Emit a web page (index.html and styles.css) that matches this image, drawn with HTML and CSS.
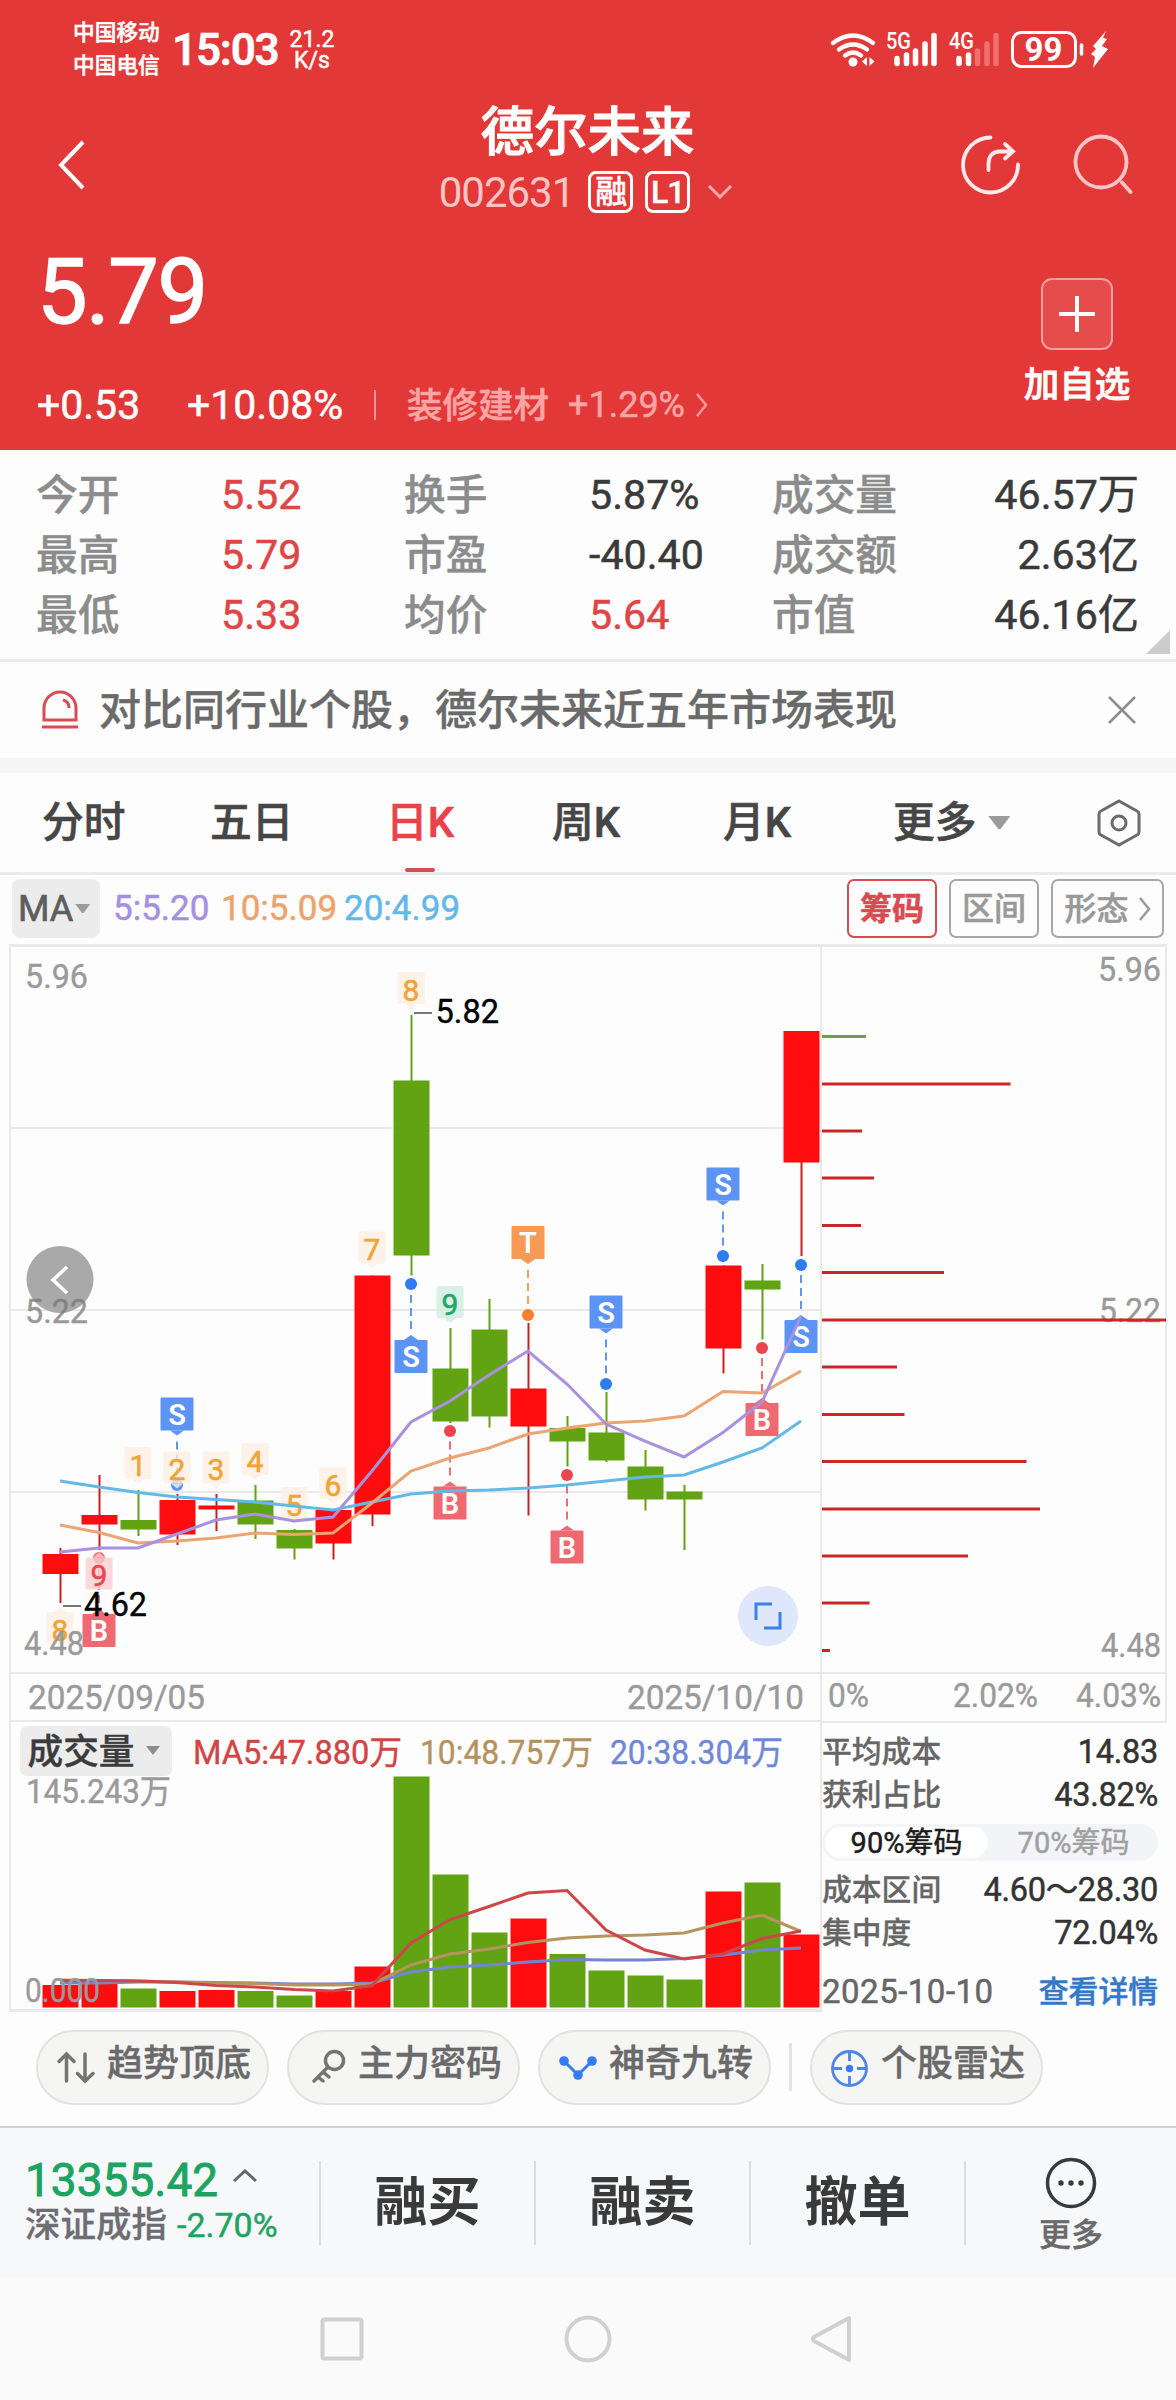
FILE: index.html
```html
<!DOCTYPE html>
<html lang="zh-CN">
<head>
<meta charset="utf-8">
<title>德尔未来 002631</title>
<link rel="stylesheet" href="styles.css">
</head>
<body>
<header class="hero">
  <div class="status">
    <div class="carriers"><span>中国移动</span><span>中国电信</span></div>
    <div class="clock">15:03</div>
    <div class="speed"><span>21.2</span><span>K/s</span></div>
    <svg class="status-icons" width="280" height="42" viewBox="830 28 280 42" fill="none" stroke="#fff" stroke-linecap="round">
      <path d="M833 43q20-15 40 0M839 49.500q14-10 28 0M845 55.500q8-6 16 0" stroke-width="4.200"/>
      <circle cx="853" cy="62" r="4.5" fill="#fff" stroke="none"/>
      <path d="M867 57v9l-5-4.500zM869.500 57v9l5-4.500z" fill="#fff" stroke="none"/>
      <path d="M897 58.500v5M906.500 55v8.500M915.500 51v12.500M925 44v19.500M934 35.500v28" stroke-width="5.5"/>
      <path d="M959 58.500v5M968.500 55v8.500" stroke-width="5.5"/>
      <path d="M977.500 51v12.500M987 44v19.500M996 35.500v28" stroke-width="5.5" stroke="#f07070"/>
      <rect x="1012.500" y="32.500" width="63" height="34" rx="9" stroke-width="3"/>
      <path d="M1081.500 45v9" stroke-width="3.500"/>
      <path d="M1106 31l-13 15 3 3-5 5 4 3-2 11 15-19-6-3 5-7-4-1z" fill="#fff" stroke="none"/>
      <g class="status-text" fill="#fff" stroke="none">
        <text x="886" y="49" font-size="23" font-weight="500" textLength="25" lengthAdjust="spacingAndGlyphs">5G</text>
        <text x="949" y="49" font-size="23" font-weight="500" textLength="25" lengthAdjust="spacingAndGlyphs">4G</text>
        <text x="1043.500" y="61" font-size="33" font-weight="700" text-anchor="middle">99</text>
      </g>
    </svg>
  </div>
  <div class="titlebar">
    <svg class="back" width="30" height="52" viewBox="0 0 30 52" fill="none" stroke="#fff" stroke-width="4"><path d="M26 3L4 26l22 23"/></svg>
    <div class="title">
      <h1>德尔未来</h1>
      <div class="code"><span>002631</span><b>融</b><b>L1</b>
        <svg width="26" height="14" viewBox="0 0 26 14" fill="none" stroke="#f5a9a9" stroke-width="3"><path d="M2 1l11 11L24 1"/></svg></div>
    </div>
    <svg class="tools" width="174" height="62" viewBox="959 133 174 62" fill="none" stroke="#ffe9e9" stroke-width="3.800" stroke-linecap="round">
      <path d="M990.500 137.500a27.500 27.500 0 1 0 27.500 27"/>
      <path d="M988.500 170v-6c0-8 4-12.500 11-12.500h12M1005 144l8 7.500-8 7"/>
      <circle cx="1101" cy="162" r="25.500" stroke="#ffc5c5"/><path d="M1122 182.500l8.500 9.500" stroke="#ffc5c5"/>
    </svg>
  </div>
  <div class="quote">
    <div class="price">5.79</div>
    <div class="change"><span class="diff">+0.53</span><span class="pct">+10.08%</span><i></i><span class="sector">装修建材</span><span class="sector-pct">+1.29%</span>
      <svg width="14" height="26" viewBox="0 0 14 26" fill="none" stroke="#f79b9b" stroke-width="2.500"><path d="M2 2l9 11-9 11"/></svg></div>
    <div class="fav"><div class="plus"><svg width="36" height="36" viewBox="0 0 36 36" stroke="#fff" stroke-width="4"><path d="M18 0v36M0 18h36"/></svg></div><span>加自选</span></div>
  </div>
</header>

<section class="stats">
  <label>今开</label><span class="up">5.52</span><label>换手</label><span>5.87%</span><label>成交量</label><span class="end">46.57万</span>
  <label>最高</label><span class="up">5.79</span><label>市盈</label><span>-40.40</span><label>成交额</label><span class="end">2.63亿</span>
  <label>最低</label><span class="up">5.33</span><label>均价</label><span class="up">5.64</span><label>市值</label><span class="end">46.16亿</span>
</section>

<section class="notice">
  <svg width="38" height="40" viewBox="0 0 38 40" fill="none" stroke="#d94b52" stroke-width="3"><path d="M3 30V18a16 16 0 0 1 32 0v12zM1 37h36M22 10c4 1 6 4 6 8"/></svg>
  <p>对比同行业个股，德尔未来近五年市场表现</p>
  <svg width="28" height="28" viewBox="0 0 28 28" stroke="#8d8d8d" stroke-width="2.500"><path d="M1 1l26 26M27 1L1 27"/></svg>
</section>

<nav class="tabs">
  <span>分时</span><span>五日</span><span class="on">日K</span><span>周K</span><span>月K</span>
  <span class="more">更多<i class="tri"></i></span>
  <svg width="44" height="48" viewBox="0 0 44 48" fill="none" stroke="#6b6b6b" stroke-width="3"><path d="M22 2l18 10q2 1 2 3v18q0 2-2 3L22 46 4 36q-2-1-2-3V15q0-2 2-3z"/><circle cx="22" cy="24" r="7"/></svg>
</nav>

<section class="indicators">
  <button class="select">MA<i class="tri"></i></button>
  <span class="m5">5:5.20</span><span class="m10">10:5.09</span><span class="m20">20:4.99</span>
  <div class="modes"><button class="on">筹码</button><button>区间</button><button class="wide">形态<svg width="13" height="26" viewBox="0 0 13 26" fill="none" stroke="#999" stroke-width="2.500"><path d="M2 2l9 11-9 11"/></svg></button></div>
</section>

<section class="chart">
  <svg id="kline" width="813" height="1068" viewBox="9 944 813 1068"></svg>
  <aside>
    <svg id="chips" width="345" height="780" viewBox="822 944 345 780"></svg>
    <div class="panel">
      <div class="line"><span>平均成本</span><b>14.83</b></div>
      <div class="line"><span>获利占比</span><b>43.82%</b></div>
      <div class="toggle"><span class="on">90%筹码</span><span>70%筹码</span></div>
      <div class="line"><span>成本区间</span><b>4.60～28.30</b></div>
      <div class="line"><span>集中度</span><b>72.04%</b></div>
      <div class="line last"><em>2025-10-10</em><a>查看详情</a></div>
    </div>
  </aside>
</section>

<section class="pills">
  <div class="pill"><svg width="40" height="40" viewBox="0 0 40 40" fill="none" stroke="#747474" stroke-width="3.500" stroke-linecap="round"><path d="M10.500 33V6M3 13.500L10.500 6l7.500 7.500M29 6v27M21.500 25.500L29 33l8-7.500"/></svg><span>趋势顶底</span></div>
  <div class="pill"><svg width="40" height="40" viewBox="0 0 40 40" fill="none" stroke="#747474" stroke-width="3.500" stroke-linecap="round"><circle cx="27.500" cy="12.500" r="9"/><path d="M20.500 19.500L7 33M16 24l6 5M11 29l5 4"/></svg><span>主力密码</span></div>
  <div class="pill"><svg width="40" height="40" viewBox="0 0 40 40" fill="#357bf2" stroke="#357bf2" stroke-width="3"><path d="M6 13l14 14 14-14" fill="none"/><g stroke="none"><circle cx="6" cy="13" r="4.800"/><circle cx="34" cy="13" r="4.800"/><circle cx="20" cy="27" r="4.800"/></g></svg><span>神奇九转</span></div>
  <i></i>
  <div class="pill"><svg width="40" height="40" viewBox="0 0 40 40" fill="none" stroke="#4d85ea" stroke-width="2.800"><circle cx="19.500" cy="20.500" r="17"/><path d="M19.500 4v9M19.500 28v9M3 20.500h9M27 20.500h9"/><circle cx="19.500" cy="20.500" r="3.700" fill="#357bf2" stroke="none"/></svg><span>个股雷达</span></div>
</section>

<footer class="actions">
  <div class="index">
    <div class="top">13355.42<svg width="26" height="14" viewBox="0 0 26 14" fill="none" stroke="#666" stroke-width="3"><path d="M2 12L13 2l11 10"/></svg></div>
    <div class="bottom"><span>深证成指</span><em>-2.70%</em></div>
  </div>
  <div class="act">融买</div><div class="act">融卖</div><div class="act">撤单</div>
  <div class="act more"><svg width="52" height="52" viewBox="0 0 52 52" fill="none" stroke="#3a3a3a" stroke-width="3.500"><circle cx="26" cy="26" r="23.500"/><g fill="#3a3a3a" stroke="none"><circle cx="16" cy="26" r="2.700"/><circle cx="26" cy="26" r="2.700"/><circle cx="36" cy="26" r="2.700"/></g></svg><span>更多</span></div>
</footer>
<div class="sysnav">
  <svg width="534" height="50" viewBox="320 2314 534 50" fill="none" stroke="#d0d0d0" stroke-width="4"><rect x="322.500" y="2319.500" width="39" height="39" rx="2"/><circle cx="588" cy="2339" r="21.500"/><path d="M849 2318v42l-35-19q-2-2 0-4z" stroke-linejoin="round"/></svg>
</div>
<script src="chart.js"></script>
</body>
</html>
```
FILE: styles.css
```css
* { box-sizing: border-box; }
body { margin: 0; width: 1176px; height: 2400px; background: #fdfdfd; color: #3a3a3a; font-family: Roboto, "Noto Sans CJK SC", sans-serif; overflow: hidden; -webkit-text-stroke: .5px; }
svg { display: block; flex: none; -webkit-text-stroke: 0; }
svg text { font-family: Roboto, "Noto Sans CJK SC", sans-serif; }
i, em { font-style: normal; }
button { font: inherit; background: none; border: 0; padding: 0; }

.hero { height: 450px; background: #e33838; color: #fff; }
.status { height: 100px; display: flex; padding: 0 66px 0 73px; }
.carriers { display: flex; flex-direction: column; padding-top: 16px; width: 99px; font-size: 21.7px; line-height: 33px; font-weight: 500; }
.clock { font-size: 44px; line-height: 101px; font-weight: 600; letter-spacing: -1.2px; width: 117px; }
.speed { display: flex; flex-direction: column; padding-top: 29px; width: 46px; align-items: center; font-size: 23px; line-height: 21px; }
.status-icons { margin: 28px 0 0 auto; }
.titlebar { height: 125px; display: flex; justify-content: space-between; padding: 0 43px 0 57px; }
.back { margin-top: 39px; }
.title { width: 320px; margin-left: 129px; display: flex; flex-direction: column; align-items: center; -webkit-text-stroke: .4px; }
.title h1 { margin: 0; font-size: 53.500px; line-height: 60px; padding-top: 3px; font-weight: 500; white-space: nowrap; -webkit-text-stroke: 1px; }
.code { display: flex; align-items: center; height: 58px; font-size: 42px; color: #fbc4c4; letter-spacing: -1px; margin-left: -3px; }
.code span { margin-right: 14px; -webkit-text-stroke: 0; }
.code b { width: 45px; height: 42px; border: 3px solid #fff; border-radius: 8px; margin-right: 12px; font-size: 32px; line-height: 36px; color: #fff; text-align: center; font-weight: 500; }
.code svg { margin-left: 5px; }
.tools { margin-top: 33px; }
.quote { height: 225px; display: grid; grid-template: 125px 100px / 1fr 106px; padding: 0 46px 0 37px; }
.price { font-size: 90px; line-height: 136px; font-weight: 400; letter-spacing: -1.5px; -webkit-text-stroke: 1.5px; }
.change { display: flex; align-items: center; height: 110px; font-size: 41px; }
.diff { width: 150px; } .pct { width: 187px; }
.change i { width: 2px; height: 30px; background: #f09494; margin-right: 31px; }
.sector { font-size: 35.500px; width: 161px; color: #f9a5a5; font-weight: 500; margin-top: -5px; }
.sector-pct { font-size: 36px; width: 127px; color: #f9a5a5; }
.fav { grid-column: 2; grid-row: 1 / 3; display: flex; flex-direction: column; align-items: center; padding-top: 53px; font-size: 35.500px; line-height: 71px; font-weight: 500; white-space: nowrap; -webkit-text-stroke: .8px; }
.plus { flex: none; width: 72px; height: 72px; border: 2px solid #f2a0a0; border-radius: 11px; background: #e64c4c; display: flex; align-items: center; justify-content: center; }

.stats { height: 212px; display: grid; grid-template: repeat(3, 60px) / 185px 183px 185px 183px 180px 1fr; padding: 15px 37px 0 36px; font-size: 41.200px; line-height: 61px; border-bottom: 3px solid #ebebeb; position: relative; }
.stats::after { content: ""; position: absolute; right: 6px; bottom: 5px; border: 12px solid; border-color: transparent #ccc #ccc transparent; }
.stats label { color: #8c8c8c; font-size: 41.700px; font-weight: 500; line-height: 62px; -webkit-text-stroke: .4px; }
.stats .up { color: #df4545; }
.stats .end { text-align: right; white-space: nowrap; }

.notice { height: 111px; display: flex; align-items: center; padding: 0 40px 0 41px; border-bottom: 15px solid #f5f5f5; }
.notice p { flex: 1; margin: 2px 0 0 20px; font-size: 42px; color: #6a6a6a; font-weight: 500; line-height: 60px; -webkit-text-stroke: .4px; }

.tabs { height: 102px; display: grid; grid-template-columns: 168px 173px 169px 171px 170px 204px 44px; padding: 0 0 0 42px; align-items: center; font-size: 41.700px; line-height: 99px; font-weight: 500; color: #464646; border-bottom: 3px solid #ebebeb; -webkit-text-stroke: .6px; }
.tabs span { height: 99px; }
.tabs .on { color: #e8434a; display: flex; flex-direction: column; padding-left: 3px; }
.tabs .on::after { content: ""; width: 30px; height: 4px; background: #d94b52; margin: -4px 0 0 19px; border-radius: 2px; }
.more { display: flex; align-items: center; }
.tri { width: 22px; height: 13px; background: #9b9b9b; clip-path: polygon(0 0, 100% 0, 55% 100%, 45% 100%); margin-left: 12px; }

.indicators { height: 69px; display: flex; padding: 4px 12px 0; line-height: 60px; font-size: 35px; }
.select { width: 88px; height: 59px; border-radius: 8px; background: #ececec; display: flex; align-items: center; padding-left: 6px; font-size: 36px; color: #5e5e5e; -webkit-text-stroke: .7px; }
.select .tri { width: 15px; height: 9px; margin-left: 2px; }
.m5 { color: #a68fe0; width: 108px; margin-left: 13px; }
.m10 { color: #eda36c; width: 123px; }
.m20 { color: #62b9e8; }
.modes { margin-left: auto; display: flex; gap: 12px; font-size: 32px; color: #999; }
.modes button { width: 90px; height: 59px; border: 2px solid #a8a8a8; border-radius: 7px; color: #999; line-height: 54px; display: flex; align-items: center; justify-content: center; font-weight: 500; }
.modes .on { border-color: #d94b52; color: #d94b52; font-weight: 700; }
.modes .wide { width: 113px; gap: 9px; }

.chart { height: 1068px; display: grid; grid-template-columns: 813px 345px; padding-left: 9px; }
.panel { height: 288px; padding-top: 6px; width: 336px; font-size: 32px; line-height: 43px; }
.line { display: flex; justify-content: space-between; height: 43px; color: #666; font-size: 29.800px; }
.line span { font-weight: 500; -webkit-text-stroke: .3px; }
.line b { font-size: 32.500px; font-weight: 400; color: #333; padding-top: 1px; letter-spacing: -.3px; }
.line em { font-size: 33px; letter-spacing: .5px; }
.line a { color: #3479c9; font-weight: 500; -webkit-text-stroke: .5px; }
.line.last { margin-top: 16px; }
.toggle { height: 37px; margin: 8px 0 7px; border-radius: 19px; background: #f2f4f8; display: flex; padding: 3px; }
.toggle span { width: 163px; text-align: center; font-size: 29px; line-height: 32px; color: #a0a0a0; border-radius: 16px; padding-left: 8px; }
.toggle .on { background: #fff; color: #1c1c1c; padding: 0; }

.pills { height: 116px; display: flex; padding: 18px 0 0 36px; border-bottom: 2px solid #d2d2d4; }
.pill { width: 233px; height: 75px; border: 2px solid #e2e2e2; border-radius: 38px; background: #f5f5f4; margin-right: 18px; display: flex; align-items: center; padding-left: 18px; font-size: 36px; color: #6a6a6a; font-weight: 500; -webkit-text-stroke: .4px; }
.pill span { margin: -8px 0 0 11px; line-height: 50px; white-space: nowrap; }
.pills > i { width: 3px; height: 48px; background: #e3e3e3; margin: 13px 18px 0 0; }

.actions { height: 150px; background: #f7f8fa; display: grid; grid-template-columns: 319px 215px 215px 215px 1fr; padding-top: 33px; }
.index { padding-left: 25px; }
.top { display: flex; align-items: center; font-size: 46px; line-height: 38px; color: #1da462; font-weight: 400; letter-spacing: 0; -webkit-text-stroke: .9px; }
.top svg { margin: -8px 0 0 14px; }
.bottom { display: flex; align-items: center; font-size: 35.500px; line-height: 42px; color: #6d6d73; margin-top: 5px; font-weight: 500; -webkit-text-stroke: .3px; }
.bottom em { margin-left: 10px; font-size: 34px; color: #1da462; font-weight: 400; -webkit-text-stroke: .5px; }
.act { height: 84px; border-left: 2px solid #dcdde0; text-align: center; font-size: 53px; line-height: 85px; font-weight: 700; color: #3a3a3a; -webkit-text-stroke: 0; }
.act.more { display: flex; flex-direction: column; align-items: center; gap: 0; font-size: 32px; font-weight: 500; color: #6a6a6a; line-height: 48px; -webkit-text-stroke: .4px; }
.act.more svg { margin-top: -4px; margin-bottom: 2px; }
.sysnav { height: 122px; background: #fafafa; padding: 36px 0 0 320px; }
```
FILE: chart.js
```js
const RED = '#fe0c0e', GREEN = '#62a314', LINE = '#e9e9e9', GREY = '#9a9a9a';
const X = i => 60.5 + 39 * i;

// [up, open/close top, open/close bottom, high, low, volume top]
const bars = [
  [1, 1554, 1574, 1548, 1603, 1985], [1, 1515, 1524.5, 1475, 1550, 1984],
  [0, 1520, 1529.5, 1490, 1536, 1988.5], [1, 1500, 1534.5, 1494, 1545, 1991],
  [1, 1505.5, 1509.5, 1494, 1531, 1990], [0, 1500.5, 1524.5, 1485, 1539, 1991],
  [0, 1530, 1548.5, 1529, 1559.5, 1995.5], [1, 1510, 1543.5, 1510, 1559.5, 1991],
  [1, 1275.5, 1514.5, 1275.5, 1526, 1966.5], [0, 1080.5, 1255.5, 1015, 1275.5, 1776.5],
  [0, 1368.5, 1421.5, 1328, 1423, 1874.5], [0, 1329.5, 1416.5, 1299, 1427.5, 1932.5],
  [1, 1388.5, 1426.5, 1323, 1515.5, 1918.5], [0, 1428, 1441.5, 1416, 1466.5, 1954],
  [0, 1432.5, 1460.5, 1392, 1462, 1970.5], [0, 1466.5, 1499.5, 1450, 1510.5, 1975.5],
  [0, 1491.5, 1499.5, 1485, 1550, 1979.5], [1, 1265.5, 1348.5, 1265.5, 1373.5, 1891.5],
  [0, 1280.5, 1289.5, 1264, 1339.5, 1882.5], [1, 1031, 1162.5, 1031, 1256, 1934.5]
];
const ma20 = [1481, 1487, 1492.5, 1497, 1499.5, 1502, 1506, 1510, 1502, 1494, 1491, 1490, 1488, 1485, 1481, 1477, 1475, 1462, 1448, 1421];
const ma10 = [1525, 1532.5, 1543, 1541, 1538, 1533, 1534.5, 1533, 1503, 1471, 1458, 1448, 1434, 1428, 1423, 1421, 1416, 1391.5, 1393, 1371];
const ma5 = [1552, 1548, 1548, 1534, 1520, 1514, 1521, 1517, 1471, 1422, 1401, 1375, 1351, 1384, 1424, 1441, 1457, 1432.5, 1402, 1316];
const v5 = [1980.5, 1980.5, 1981, 1982.5, 1985.5, 1987, 1989.5, 1991, 1985.5, 1943, 1919.5, 1906.5, 1893, 1890.5, 1930, 1950, 1959, 1954, 1938.5, 1931];
const v10 = [1980, 1980.5, 1981, 1982, 1983, 1983.5, 1985, 1985, 1984, 1965, 1954, 1949, 1942.5, 1938, 1936, 1935, 1933, 1923, 1915, 1931.5];
const v20 = [1983, 1983, 1982, 1982, 1982.5, 1983, 1984, 1984, 1983, 1972, 1967, 1965, 1962, 1959.5, 1960, 1960, 1958.5, 1955, 1950, 1948];

const rect = (x, y, w, h, c, extra = '') => `<rect x="${x}" y="${y}" width="${w}" height="${h}" fill="${c}" ${extra}/>`;
const seg = (x1, y1, x2, y2, c, w = 2, extra = '') => `<path d="M${x1} ${y1}L${x2} ${y2}" stroke="${c}" stroke-width="${w}" ${extra}/>`;
const curve = (ys, c, w = 3) => `<polyline points="${ys.map((y, i) => (X(i) - .5) + ',' + y).join(' ')}" fill="none" stroke="${c}" stroke-width="${w}"/>`;
const text = (s, x, y, len, c, size = 33.5, extra = '') => `<text x="${x}" y="${y}" font-size="${size}" fill="${c}" stroke="${c}" stroke-width=".4" textLength="${len}" lengthAdjust="spacingAndGlyphs" ${extra}>${s}</text>`;

// Small numbered tag; dir 1 points down, -1 points up
function tag(n, i, y, dir = 1, bg = '#fdf0e2', fg = '#f0a437') {
  const x = X(i) - .5, t = dir > 0 ? y + 32 : y;
  return `<g opacity=".8">${rect(x - 13.5, y, 27, 32, bg, 'rx="2"')}<path d="M${x - 6} ${t}L${x} ${t + 5 * dir}L${x + 6} ${t}z" fill="${bg}"/></g>
    <text x="${x}" y="${y + 28.5}" font-size="30" text-anchor="middle" fill="${fg}" stroke="${fg}" stroke-width=".6">${n}</text>`;
}
// Lettered signal badge with its dashed leader and dot
function signal(ch, i, y, dotY, soft) {
  const [bg, dot] = { S: ['#5b94f5', '#2f7bf0'], B: ['#ef6a70', '#ea444c'], T: ['#f79a56', '#f8822b'] }[ch];
  const x = X(i) - .5, down = dotY > y, t = down ? y + 33 : y, s = down ? 1 : -1;
  return seg(x, t + s * 11, x, dotY - s * 7, dot, 1.8, 'stroke-dasharray="8 5" opacity=".85"') +
    `<circle cx="${x}" cy="${dotY}" r="6" fill="${dot}" ${soft ? 'opacity=".8"' : ''}/>` +
    rect(x - 16.5, y, 33, 33, bg, 'rx="1"') +
    `<path d="M${x - 7} ${t}L${x} ${t + 5 * s}L${x + 7} ${t}z" fill="${bg}"/>
    <text x="${x}" y="${y + 27}" font-size="29" font-weight="600" text-anchor="middle" fill="#fff">${ch}</text>`;
}

let k = '';
for (const y of [1128, 1310, 1492, 1673, 1721]) k += seg(10, y, 822, y, LINE);
k += seg(9, 945.5, 822, 945.5, LINE, 3) + seg(10, 944, 10, 2012, LINE) + seg(821, 944, 821, 2012, LINE) + seg(9, 2010.5, 822, 2010.5, LINE, 3);
k += `<circle cx="60" cy="1279.500" r="33.500" fill="#a9a9a9"/><path d="M67 1267L53 1280l14 13" fill="none" stroke="#fff" stroke-width="3.500"/>`;
k += text('5.96', 25, 988, 63, GREY) + text('5.22', 25, 1323, 63, '#777', 33.5, 'opacity=".75"');
bars.forEach(([up, t, b, h, l, v], i) => {
  const c = up ? RED : GREEN, x = X(i);
  k += seg(x, h, x, l, up ? '#c92020' : GREEN) + rect(x - 18, t, 36, b - t, c) + rect(x - 18, v, 36, 2007.5 - v, c);
});
k += signal('S', 3, 1397.5, 1485, 1) + signal('S', 9, 1340, 1284) + signal('B', 10, 1486.5, 1431) + signal('T', 12, 1226, 1315) +
  signal('B', 13, 1530.5, 1475) + signal('S', 14, 1295.5, 1384) + signal('S', 17, 1167.5, 1256) + signal('B', 18, 1403, 1348) +
  signal('S', 19, 1320, 1265) + signal('B', 1, 1614, 1558, 1);
k += tag(1, 2, 1447) + tag(2, 3, 1451.5) + tag(3, 4, 1451.5) + tag(4, 5, 1443) + tag(5, 6, 1487) + tag(6, 7, 1467) + tag(7, 8, 1231.5) + tag(8, 9, 972) +
  tag(9, 10, 1286, 1, '#cfeee0', '#1fa867') + tag(9, 1, 1557.5, -1, '#fdd0d3', '#e5484f') + tag(8, 0, 1612, -1);
k += curve(ma20, '#63b9e6') + curve(ma10, '#eda474') + curve(ma5, '#a991e0');
k += text('4.48', 24, 1655, 60, GREY);
k += seg(414, 1013, 432, 1013, '#777') + text('5.82', 435.5, 1023, 63.5, '#000') + seg(63, 1606, 81, 1606, '#777') + text('4.62', 84, 1615.5, 63, '#000');
k += `<circle cx="768" cy="1616" r="30" fill="#dfe8fb"/><path d="M772 1604h-16v16M764 1628h16v-16" fill="none" stroke="#3d80e8" stroke-width="3"/>`;
k += text('2025/09/05', 28, 1709, 177, GREY) + text('2025/10/10', 627, 1709, 177, GREY);
k += curve(v20, '#7286d0') + curve(v10, '#b5945f') + curve(v5, '#cc4747');
k += rect(20, 1726, 152, 50, '#ececec', 'rx="7"') + text('成交量', 27.5, 1763.5, 107, '#3c3c3c', 35.5, 'font-weight="500"') + '<path d="M146 1746h14l-7 9z" fill="#8c8c8c"/>';
k += text('MA5:47.880万', 193, 1764, 209, '#d04545') + text('10:48.757万', 420, 1764, 173, '#b3935d') + text('20:38.304万', 610, 1764, 173, '#7087d4');
k += text('145.243万', 26, 1803, 145, GREY) + text('0.000', 25, 2002, 75, GREY);
document.getElementById('kline').innerHTML = k;

// Cost distribution: [price position, right end]
const chips = [[1084, 1010.5], [1131, 862], [1178, 874], [1225.5, 861], [1272.5, 944], [1320, 1166], [1367, 897], [1414.5, 904.5], [1461.5, 1026.5], [1509, 1040], [1556, 968], [1603, 869.5], [1650.5, 830]];
let c = seg(822, 945.5, 1167, 945.5, LINE, 3) + seg(822, 1673, 1167, 1673, LINE) + seg(822, 1722, 1167, 1722, LINE) + seg(1166, 944, 1166, 1723, LINE);
c += text('5.96', 1098, 981, 63, GREY) + text('5.22', 1099, 1322, 62, GREY) + text('4.48', 1101, 1657, 60, GREY);
c += seg(822, 1036.5, 866, 1036.5, '#6f9f55', 3);
chips.forEach(([y, x]) => c += seg(822, y, x, y, '#cb2626', 3));
c += text('0%', 828, 1707, 41, GREY) + text('2.02%', 953, 1707, 85, GREY) + text('4.03%', 1076, 1707, 85, GREY);
document.getElementById('chips').innerHTML = c;
```
